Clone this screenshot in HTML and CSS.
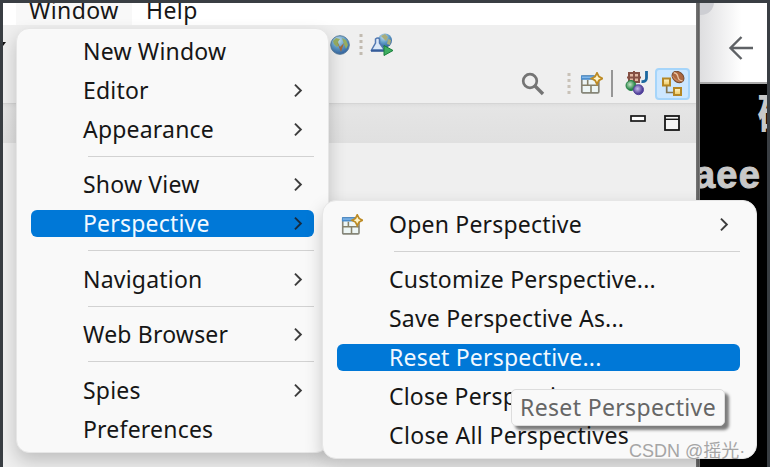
FILE: index.html
```html
<!DOCTYPE html>
<html lang="en">
<head>
<meta charset="utf-8">
<title>Eclipse</title>
<link rel="stylesheet" href="styles.css">
</head>
<body>
<svg class="defs" width="0" height="0">
  <defs>
    <linearGradient id="gold" x2="0" y2="1"><stop offset="0" stop-color="#fff7d2"/><stop offset="1" stop-color="#edc75a"/></linearGradient>
    <radialGradient id="sea" cx=".4" cy=".25" r=".8"><stop offset="0" stop-color="#c5e0f0"/><stop offset=".5" stop-color="#5f9cc6"/><stop offset="1" stop-color="#2d5a9a"/></radialGradient>
    <radialGradient id="green" cx=".4" cy=".4"><stop offset="0" stop-color="#c5e5c5"/><stop offset="1" stop-color="#278548"/></radialGradient>
    <radialGradient id="purple" cx=".4" cy=".4"><stop offset="0" stop-color="#c8bdea"/><stop offset="1" stop-color="#51419b"/></radialGradient>
    <symbol id="chev" viewBox="0 0 10 14"><path d="M1.7 1.5L7.2 7l-5.5 5.5" fill="none" stroke="currentColor" stroke-width="1.8"/></symbol>
    <symbol id="persp" viewBox="0 0 23 23">
      <rect x="1.8" y="4" width="17" height="16.8" rx="1" fill="#edf6f5" stroke="#86867a" stroke-width="1.7"/>
      <path d="M1 3.3h13v4.5H1z" fill="#4b8dcc"/><path d="M2 5.3h12" stroke="#82b7e8" stroke-width="1.5"/>
      <path d="M7.7 8v5.3M2 13.3h17M11 13.3v7.5" stroke="#86816a" stroke-width="1.6"/>
      <path d="M17 .9l1.9 3.7 3.5 1.9-3.5 1.9-1.9 3.8-1.9-3.8-3.6-1.9 3.6-1.9z" fill="#fff5ca" stroke="#bd8b24" stroke-width="1.8"/>
    </symbol>
  </defs>
</svg>
<div class="screen">
  <div class="ide">
    <div class="menubar"><span class="top-item open">Window</span><span class="top-item">Help</span></div>
    <div class="tools">
      <div class="tool-row first">
        <svg class="caret" width="5" height="5"><path d="M0 0h3L0 4z" fill="#111"/></svg>
        <svg class="globe" width="22" height="22" viewBox="0 0 22 22"><circle cx="11" cy="11" r="9.3" fill="url(#sea)" stroke="#577c9b"/><path d="M4 7l3-3 4 1-2 3 1 3-2 2-3-3zM13 4l4 2 2 5-2 4-2-5z" fill="#97ad60"/><path d="M8 8l3 5 4-4-3 9z" fill="#a4683a"/></svg>
        <svg class="dots" width="4" height="22"><path d="M2 0v22" stroke="#c2bbb1" stroke-width="3" stroke-dasharray="3 3"/></svg>
        <svg class="launch" width="24" height="24" viewBox="0 0 24 24"><circle cx="15" cy="7.5" r="7" fill="url(#sea)"/><path d="M11 3l4-2 3 3-2 4zM18 6l3 1-1 5-3-1z" fill="#a9ad7a"/><path d="M1.5 17l4-7V6q2.500-2 4 0v4l5 7z" fill="#dbe8f7" stroke="#5379b2" stroke-width="1.5"/><path d="M1 17.800h14" stroke="#355c9a" stroke-width="2"/><path d="M14 12.5l9 5-9 5z" fill="#3fae61" stroke="#187f3a"/></svg>
      </div>
      <div class="tool-row second">
        <svg class="search" width="24" height="24" viewBox="0 0 24 24"><circle cx="9" cy="9" r="6.8" fill="none" stroke="#747474" stroke-width="2.7"/><path d="M14 14l8 8" stroke="#747474" stroke-width="3.4"/></svg>
        <svg class="dots2" width="4" height="22"><path d="M2 0v22" stroke="#c9c2b8" stroke-width="3" stroke-dasharray="3 3"/></svg>
        <svg class="persp-tool" width="23" height="23"><use href="#persp"/></svg>
        <span class="rule"></span>
        <svg class="java" width="24" height="25" viewBox="0 0 24 25"><path d="M4 2h10v9H4zM2 6.5h14M9 0v12" fill="#e1b7a1" stroke="#855044" stroke-width="2"/><path d="M21.5 0v7q0 4-5 3.5" fill="none" stroke="#1c689f" stroke-width="2.8"/><circle cx="6" cy="14.5" r="5" fill="url(#green)" stroke="#268346"/><circle cx="13.5" cy="18.7" r="5" fill="url(#purple)" stroke="#56469b"/></svg>
        <span class="selected"><svg width="26" height="26" viewBox="0 0 26 26"><path d="M5.7 14v7.5h7" fill="none" stroke="#837652" stroke-width="1.7"/><rect x="2" y="7.500" width="7" height="7" fill="url(#gold)" stroke="#b58724" stroke-width="2"/><rect x="13" y="17" width="7" height="7" fill="url(#gold)" stroke="#b58724" stroke-width="2"/><g transform="rotate(40 17 6)"><ellipse cx="17" cy="6" rx="6.5" ry="5" fill="#ad673f" stroke="#75492d"/><path d="M11 5.500q3-2 6 .5t6 0" fill="none" stroke="#ecc7a5" stroke-width="1.3"/><path d="M12 8.500q4 2 9 0" fill="none" stroke="#c98a60"/></g></svg></span>
      </div>
    </div>
    <div class="tabstrip">
      <svg class="min" width="16" height="7"><rect x="1" y="1" width="14" height="5" fill="#fff" stroke="#171717" stroke-width="1.7"/></svg>
      <svg class="max" width="16" height="16"><rect x="1" y="1" width="14" height="14" fill="#f5f5f5" stroke="#171717" stroke-width="1.8"/><path d="M1 4.3h14" stroke="#171717" stroke-width="1.4"/></svg>
    </div>
  </div>
  <div class="edge"></div>
  <div class="browser">
    <div class="browser-top"><span class="tab-curve"></span><svg class="back" width="26" height="26" viewBox="0 0 26 26"><path d="M25 13H3M13.5 2L2.5 13l11 11" fill="none" stroke="#5e6165" stroke-width="2.4"/></svg></div>
    <div class="page"><div class="han">确</div><div class="aee">aee</div></div>
  </div>
</div>

<div class="menu main-menu">
  <div class="item"><span>New Window</span></div>
  <div class="item"><span>Editor</span><svg class="chev"><use href="#chev"/></svg></div>
  <div class="item"><span>Appearance</span><svg class="chev"><use href="#chev"/></svg></div>
  <div class="sep"></div>
  <div class="item"><span>Show View</span><svg class="chev"><use href="#chev"/></svg></div>
  <div class="item active"><span>Perspective</span><svg class="chev"><use href="#chev"/></svg></div>
  <div class="sep"></div>
  <div class="item"><span>Navigation</span><svg class="chev"><use href="#chev"/></svg></div>
  <div class="sep"></div>
  <div class="item"><span>Web Browser</span><svg class="chev"><use href="#chev"/></svg></div>
  <div class="sep"></div>
  <div class="item"><span>Spies</span><svg class="chev"><use href="#chev"/></svg></div>
  <div class="item"><span>Preferences</span></div>
</div>
<div class="menu sub-menu">
  <div class="item"><svg class="item-icon" width="22" height="22"><use href="#persp"/></svg><span>Open Perspective</span><svg class="chev"><use href="#chev"/></svg></div>
  <div class="sep"></div>
  <div class="item"><span>Customize Perspective...</span></div>
  <div class="item"><span>Save Perspective As...</span></div>
  <div class="item active"><span>Reset Perspective...</span></div>
  <div class="item"><span>Close Perspective</span></div>
  <div class="item"><span class="wide">Close All Perspectives</span></div>
</div>
<div class="tooltip">Reset Perspective</div>
<div class="watermark">CSDN @摇光·</div>
</body>
</html>
```
FILE: styles.css
```css
* { box-sizing: border-box; }
body { margin: 0; width: 770px; height: 467px; overflow: hidden; position: relative; font: 23px/39px "Noto Sans", "Open Sans", sans-serif; letter-spacing: .2px; color: #161616; background: #393e43; }
.defs { position: absolute; }
svg { display: block; flex: none; }
.screen { display: flex; height: 467px; padding: 3px 3px 0; }
.ide { width: 693px; background: #efefef; overflow: hidden; }
.menubar { height: 22px; background: #fff; display: flex; overflow: hidden; padding-left: 13px; }
.top-item { width: 116px; height: 22px; line-height: 14px; padding-left: 13px; white-space: nowrap; letter-spacing: .4px; }
.top-item.open { background: #f8f8f8; }
.top-item + .top-item { padding-left: 14px; }
.tools { height: 78px; background: #efefef; }
.tool-row { display: flex; align-items: center; height: 39px; }
.caret { margin-right: 321px; }
.globe { margin-right: 8px; }
.dots { margin-right: 7px; }
.second { justify-content: flex-end; padding-right: 6px; }
.search { margin-right: 22px; }
.dots2 { margin-right: 9px; }
.persp-tool { margin-right: 8px; }
.rule { width: 2px; height: 27px; background: #969696; margin-right: 12px; }
.java { margin-right: 6px; }
.selected { width: 35px; height: 32px; border: 2px solid #a6d5fa; background: #cce7ff; border-radius: 4px; padding: 1px 0 0 4px; }
.tabstrip { height: 40px; background: linear-gradient(#dedede, #e5e5e5 10%, #e0e0e0); border-top: 1px solid #d5d5d5; display: flex; justify-content: flex-end; padding: 11px 16px 0 0; }
.min { margin-right: 18px; }
.edge { width: 4px; background: linear-gradient(90deg, #777, #5e5e5e 60%, #888); flex: none; }
.browser { width: 67px; background: #000; overflow: hidden; }
.browser-top { height: 81px; background: linear-gradient(90deg, #dedee0, #fff 62%); border-bottom: 2px solid #aaa; display: flex; padding: 32px 0 0 28px; position: relative; }
.tab-curve { position: absolute; left: -12px; top: -14px; width: 26px; height: 26px; border-radius: 50%; background: #cdced3; }
.page { font-family: "Liberation Sans", "Noto Sans CJK SC", sans-serif; font-weight: bold; color: #c8c8c8; overflow: hidden; }
.han { font-size: 43px; line-height: 62px; height: 70px; padding-left: 57px; white-space: nowrap; }
.aee { font-size: 38px; line-height: 38px; margin: 2px 0 0 -6px; letter-spacing: 1.2px; -webkit-text-stroke: 1px #c8c8c8; }
.menu { position: absolute; background: #f9f9f9; border: 1px solid #e6e6e6; white-space: nowrap; }
.main-menu { left: 16px; top: 28px; width: 313px; height: 425px; border-radius: 13px; padding: 3px 14px 0; box-shadow: 0 8px 18px rgba(0,0,0,.2); }
.sub-menu { left: 322px; top: 200px; width: 435px; height: 259px; border-radius: 14px; padding: 4px 16px 0 14px; box-shadow: 0 8px 18px rgba(0,0,0,.2); }
.item { height: 39px; display: flex; align-items: center; padding-left: 52px; }
.active { color: #f2f9ff; height: 27px; margin: 6px 0; background: #0078d7; border-radius: 6px; line-height: 27px; }
.chev { width: 11px; height: 15px; margin: 0 10px 0 auto; color: #3d3d3d; }
.active .chev { color: #152b40; }
.sep { height: 16.4px; padding-top: 7px; margin-left: 57px; }
.sep::before { content: ""; display: block; height: 1px; background: #d2d2d2; }
.item-icon { margin: 0 26px 0 -48px; }
.wide { letter-spacing: .35px; }
.tooltip { position: absolute; left: 511px; top: 389px; width: 214px; height: 37px; padding-left: 8px; border: 1px solid #ddd; border-radius: 5px; background: #f9f9f9; box-shadow: 4px 4px 3px rgba(0,0,0,.5); color: #666; line-height: 35px; white-space: nowrap; letter-spacing: .35px; }
.watermark { position: absolute; left: 629px; top: 438px; font: 18px/26px "Liberation Sans", "Noto Sans CJK SC", sans-serif; letter-spacing: 0; color: #a5a5a5; white-space: nowrap; }
```
